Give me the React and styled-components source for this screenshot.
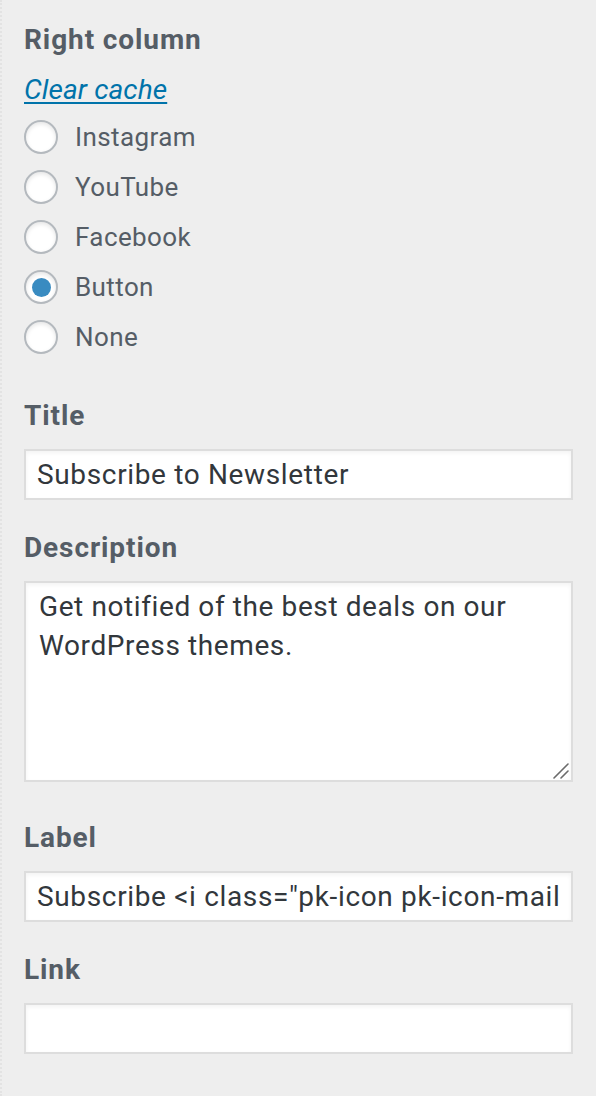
import React from 'react'
import styled, { createGlobalStyle } from 'styled-components'

const GlobalStyle = createGlobalStyle`
	html, body {
		margin: 0;
		padding: 0;
		background: #eeeeee;
	}
	body {
		font-family: Roboto, "Liberation Sans", sans-serif;
	}
`

const Panel = styled.div`
	min-height: 1096px;
	box-sizing: border-box;
	padding: 22px 23px 0 22px;
	border-left: 2px dotted #e3e3e3;
`
const SectionTitle = styled.h3`
	margin: 0 0 14px;
	font-size: 28px;
	line-height: 36px;
	font-weight: 700;
	letter-spacing: 0.9px;
	color: #555d66;
`
const CacheLink = styled.a`
	display: block;
	margin-bottom: 4px;
	font-size: 28px;
	line-height: 36px;
	font-style: italic;
	letter-spacing: 0.1px;
	color: #0073aa;
	text-decoration: underline;
	text-underline-offset: 3px;
	text-decoration-thickness: 2px;
	cursor: pointer;
`
const RadioList = styled.div`
	display: flex;
	flex-direction: column;
	margin-bottom: 36px;
`
const RadioRow = styled.label`
	display: flex;
	align-items: center;
	gap: 17px;
	height: 50px;
	font-size: 26px;
	letter-spacing: 0.4px;
	color: #555d66;
`
const RadioInput = styled.input`
	appearance: none;
	margin: 0;
	width: 34px;
	height: 34px;
	border-radius: 50%;
	border: 2px solid #b4b9be;
	background: #fff;
	box-shadow: inset 0 2px 4px rgba(0, 0, 0, 0.1);
	display: flex;
	align-items: center;
	justify-content: center;
	box-sizing: border-box;
	&:checked::before {
		content: '';
		width: 19px;
		height: 19px;
		border-radius: 50%;
		background: #398bc1;
	}
`
const Field = styled.div`
	margin-bottom: ${(p) => p.$gap || 30}px;
`
const ControlLabel = styled.label`
	display: block;
	margin-bottom: 15px;
	font-size: 28px;
	line-height: 36px;
	font-weight: 700;
	letter-spacing: 0.9px;
	color: #555d66;
`
const TextInput = styled.input`
	display: block;
	width: 100%;
	height: 51px;
	box-sizing: border-box;
	margin: 0;
	padding: 0 11px;
	border: 2px solid #dddddd;
	border-radius: 0;
	background: #fff;
	box-shadow: inset 0 2px 4px rgba(0, 0, 0, 0.05);
	font-family: Roboto, "Liberation Sans", sans-serif;
	font-size: 28px;
	letter-spacing: 0.65px;
	color: #32373c;
	outline: none;
`
const AreaWrap = styled.div`
	position: relative;
`
const TextArea = styled.textarea`
	display: block;
	width: 100%;
	height: 201px;
	box-sizing: border-box;
	margin: 0;
	padding: 4px 13px;
	border: 2px solid #dddddd;
	border-radius: 0;
	background: #fff;
	box-shadow: inset 0 2px 4px rgba(0, 0, 0, 0.05);
	font-family: Roboto, "Liberation Sans", sans-serif;
	font-size: 28px;
	line-height: 39px;
	letter-spacing: 0.6px;
	color: #32373c;
	resize: none;
	outline: none;
`
const ResizeGrip = styled.svg`
	position: absolute;
	right: 4px;
	bottom: 3px;
	width: 16px;
	height: 16px;
	pointer-events: none;
`

const options = ['Instagram', 'YouTube', 'Facebook', 'Button', 'None']

export default function App() {
	return (
		<>
			<GlobalStyle />
			<Panel>
				<SectionTitle>Right column</SectionTitle>
				<CacheLink>Clear cache</CacheLink>
				<RadioList>
					{options.map((opt) => (
						<RadioRow key={opt}>
							<RadioInput
								type="radio"
								name="right-column"
								defaultChecked={opt === 'Button'}
							/>
							{opt}
						</RadioRow>
					))}
				</RadioList>

				<Field>
					<ControlLabel>Title</ControlLabel>
					<TextInput type="text" defaultValue="Subscribe to Newsletter" />
				</Field>
				<Field $gap={38}>
					<ControlLabel>Description</ControlLabel>
					<AreaWrap>
						<TextArea defaultValue="Get notified of the best deals on our WordPress themes." />
						<ResizeGrip viewBox="0 0 16 16">
							<path
								d="M1 15 L15 1 M8 15 L15 8"
								stroke="#6b6b6b"
								strokeWidth="1.6"
								strokeLinecap="round"
							/>
						</ResizeGrip>
					</AreaWrap>
				</Field>
				<Field>
					<ControlLabel>Label</ControlLabel>
					<TextInput
						type="text"
						defaultValue={'Subscribe <i class="pk-icon pk-icon-mail"></i>'}
					/>
				</Field>
				<Field>
					<ControlLabel>Link</ControlLabel>
					<TextInput type="text" defaultValue="" />
				</Field>
			</Panel>
		</>
	)
}
